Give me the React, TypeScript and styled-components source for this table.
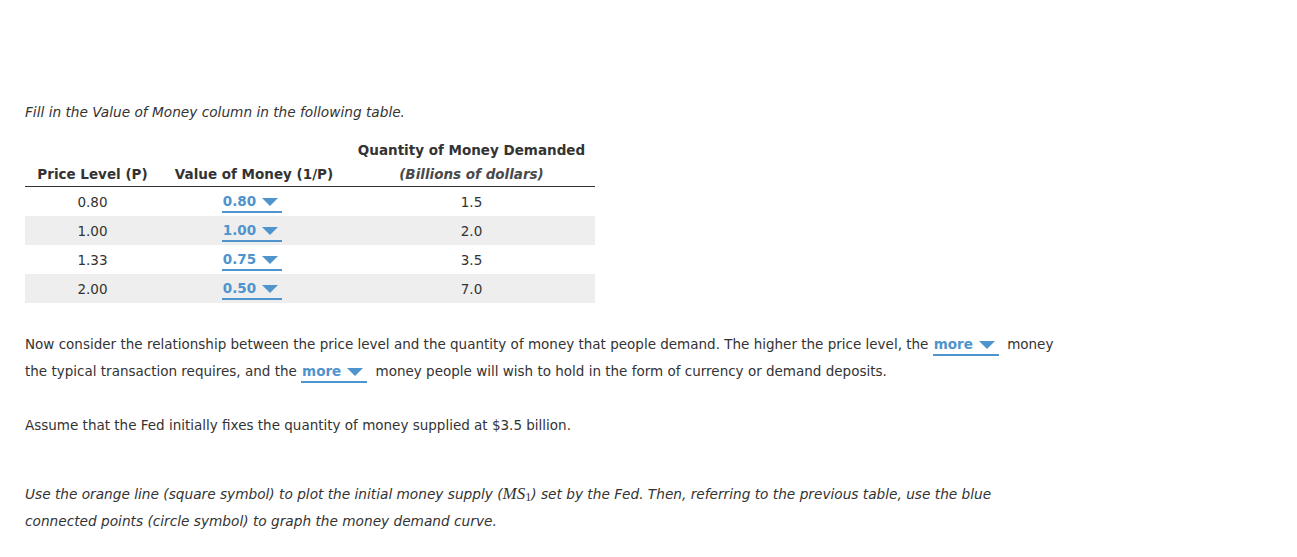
import React from "react";
import styled, { createGlobalStyle } from "styled-components";

const GlobalStyle = createGlobalStyle`
  body {
    margin: 0;
    background: #ffffff;
    font-family: "DejaVu Sans", Verdana, sans-serif;
    font-size: 13.5px;
    color: #333333;
  }
`;

const Page = styled.div`
  padding: 99px 25px 0 25px;
`;

const Para = styled.p<{ $italic?: boolean; $gap?: number }>`
  margin: 0 0 ${(p) => p.$gap ?? 0}px 0;
  line-height: 27px;
  font-style: ${(p) => (p.$italic ? "italic" : "normal")};
  font-size: ${(p) => (p.$italic ? "13.7px" : "13.5px")};
  max-width: 1036px;
`;

const Table = styled.table`
  border-collapse: collapse;
  margin: 12px 0 28px 0;
`;

const HeadCell = styled.th<{ $w: number }>`
  width: ${(p) => p.$w}px;
  font-weight: bold;
  text-align: center;
  vertical-align: bottom;
  padding: 0;
  line-height: 24px;
  border-bottom: 1px solid #333333;
`;

const Sub = styled.span`
  display: block;
  font-style: italic;
  color: #4a4a4a;
`;

const Row = styled.tr<{ $shade: boolean }>`
  background: ${(p) => (p.$shade ? "#eeeeee" : "#ffffff")};
`;

const Cell = styled.td`
  height: 29px;
  padding: 0;
  text-align: center;
  vertical-align: middle;
`;

const Drop = styled.span`
  display: inline-flex;
  align-items: center;
  gap: 6px;
  padding: 3px 4px 1px 1px;
  border-bottom: 2px solid #4f94cd;
  color: #4f94cd;
  font-weight: bold;
  font-style: normal;
  line-height: 17px;
  vertical-align: baseline;
  margin-right: 4px;
`;

const Arrow = styled.span`
  width: 0;
  height: 0;
  border-left: 8px solid transparent;
  border-right: 8px solid transparent;
  border-top: 8px solid #4f94cd;
`;

const Math = styled.span`
  font-family: "Liberation Serif", "Times New Roman", serif;
  font-style: italic;
  font-size: 17px;
`;

const SubNum = styled.sub`
  font-style: normal;
  font-size: 12px;
  vertical-align: -2px;
  line-height: 0;
`;

const Dropdown = ({ value }: { value: string }) => (
  <Drop>
    {value}
    <Arrow />
  </Drop>
);

const rows = [
  { p: "0.80", v: "0.80", q: "1.5" },
  { p: "1.00", v: "1.00", q: "2.0" },
  { p: "1.33", v: "0.75", q: "3.5" },
  { p: "2.00", v: "0.50", q: "7.0" },
];

export default function App() {
  return (
    <>
      <GlobalStyle />
      <Page>
        <Para $italic>Fill in the Value of Money column in the following table.</Para>
        <Table>
          <thead>
            <tr>
              <HeadCell $w={135}>Price Level (P)</HeadCell>
              <HeadCell $w={188}>Value of Money (1/P)</HeadCell>
              <HeadCell $w={247}>
                Quantity of Money Demanded
                <Sub>(Billions of dollars)</Sub>
              </HeadCell>
            </tr>
          </thead>
          <tbody>
            {rows.map((r, i) => (
              <Row key={r.p} $shade={i % 2 === 1}>
                <Cell>{r.p}</Cell>
                <Cell>
                  <Dropdown value={r.v} />
                </Cell>
                <Cell>{r.q}</Cell>
              </Row>
            ))}
          </tbody>
        </Table>
        <Para $gap={27}>
          Now consider the relationship between the price level and the quantity of money that
          people demand. The higher the price level, the <Dropdown value="more" /> money the
          typical transaction requires, and the <Dropdown value="more" /> money people will wish
          to hold in the form of currency or demand deposits.
        </Para>
        <Para $gap={41}>Assume that the Fed initially fixes the quantity of money supplied at $3.5 billion.</Para>
        <Para $italic>
          Use the orange line (square symbol) to plot the initial money supply (
          <Math>
            MS<SubNum>1</SubNum>
          </Math>
          ) set by the Fed. Then, referring to the previous table, use the blue connected points
          (circle symbol) to graph the money demand curve.
        </Para>
      </Page>
    </>
  );
}
